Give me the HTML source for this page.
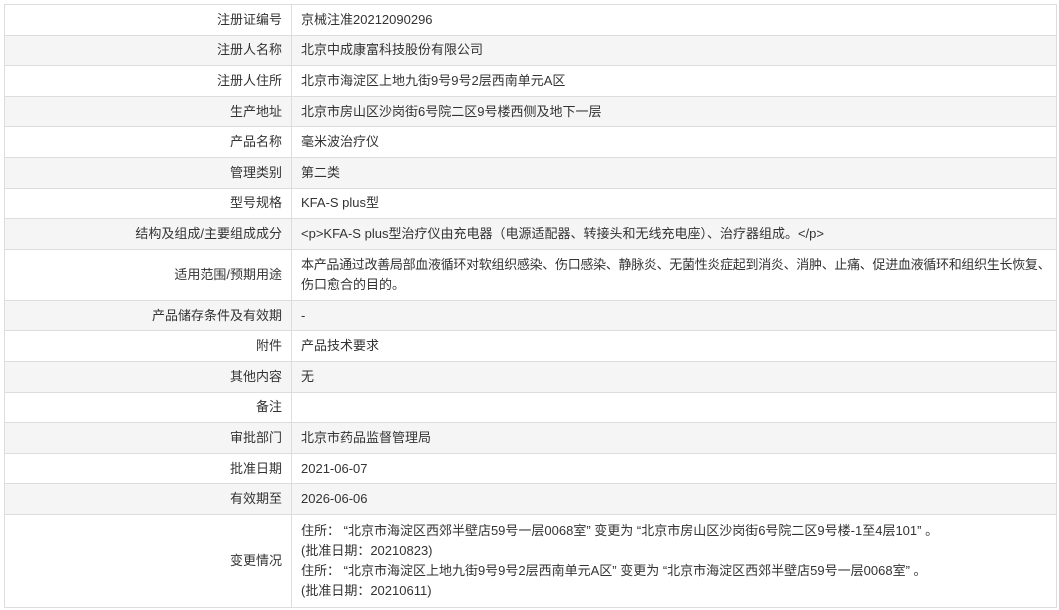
<!DOCTYPE html>
<html><head><meta charset="utf-8"><style>
body{margin:0;background:#fff;font-family:"Liberation Sans","Microsoft YaHei","Noto Sans CJK SC",sans-serif;font-size:13px;color:#333;}
table{position:absolute;left:4px;top:4px;width:1053px;border-collapse:collapse;table-layout:fixed;}
td{border:1px solid #ddd;padding:0 9px;height:29.6px;line-height:20px;vertical-align:middle;}
td.l{text-align:right;width:268px;}
tr:nth-child(even) td{background:#f5f5f5;}
</style></head><body>
<table>
<tr><td class="l">注册证编号</td><td>京械注准20212090296</td></tr>
<tr><td class="l">注册人名称</td><td>北京中成康富科技股份有限公司</td></tr>
<tr><td class="l">注册人住所</td><td>北京市海淀区上地九街9号9号2层西南单元A区</td></tr>
<tr><td class="l">生产地址</td><td>北京市房山区沙岗街6号院二区9号楼西侧及地下一层</td></tr>
<tr><td class="l">产品名称</td><td>毫米波治疗仪</td></tr>
<tr><td class="l">管理类别</td><td>第二类</td></tr>
<tr><td class="l">型号规格</td><td>KFA-S plus型</td></tr>
<tr><td class="l">结构及组成/主要组成成分</td><td>&lt;p&gt;KFA-S plus型治疗仪由充电器（电源适配器、转接头和无线充电座）、治疗器组成。&lt;/p&gt;</td></tr>
<tr><td class="l" style="height:50px">适用范围/预期用途</td><td style="padding-right:0;white-space:nowrap;overflow:hidden"><span style="letter-spacing:-0.3px">本产品通过改善局部血液循环对软组织感染、伤口感染、静脉炎、无菌性炎症起到消炎、消肿、止痛、促进血液循环和组织生长恢复、</span><br>伤口愈合的目的。</td></tr>
<tr><td class="l">产品储存条件及有效期</td><td>-</td></tr>
<tr><td class="l">附件</td><td>产品技术要求</td></tr>
<tr><td class="l">其他内容</td><td>无</td></tr>
<tr><td class="l">备注</td><td></td></tr>
<tr><td class="l">审批部门</td><td>北京市药品监督管理局</td></tr>
<tr><td class="l">批准日期</td><td>2021-06-07</td></tr>
<tr><td class="l">有效期至</td><td>2026-06-06</td></tr>
<tr><td class="l" style="height:92px">变更情况</td><td>住所： “北京市海淀区西郊半壁店59号一层0068室” 变更为 “北京市房山区沙岗街6号院二区9号楼-1至4层101” 。<br>(批准日期：20210823)<br>住所： “北京市海淀区上地九街9号9号2层西南单元A区” 变更为 “北京市海淀区西郊半壁店59号一层0068室” 。<br>(批准日期：20210611)</td></tr>
</table>
</body></html>
